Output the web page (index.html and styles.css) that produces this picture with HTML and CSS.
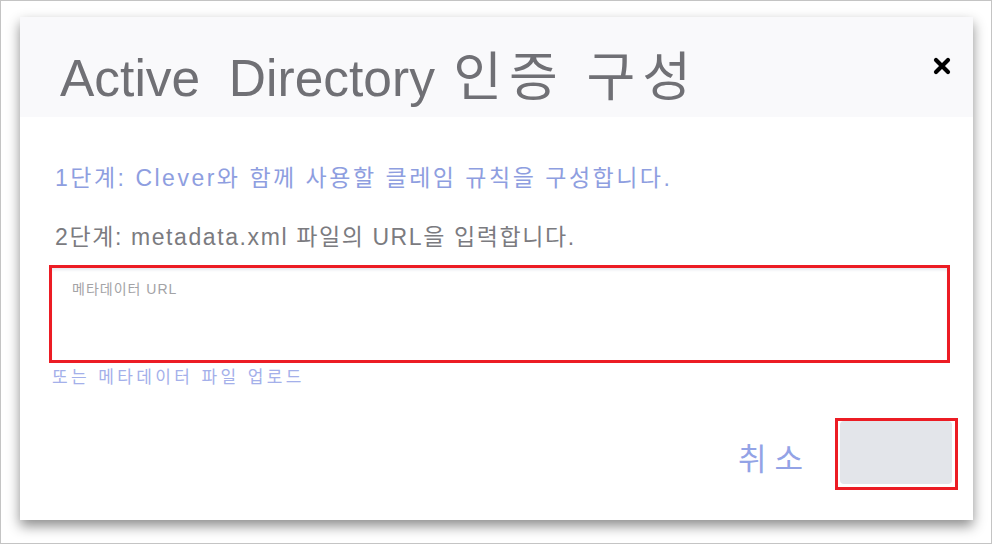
FILE: index.html
```html
<!DOCTYPE html>
<html lang="ko">
<head>
<meta charset="utf-8">
<title>Active Directory 인증 구성</title>
<link rel="stylesheet" href="styles.css">
</head>
<body>
<div class="frame">
  <div class="dialog">
    <div class="header">
      <h1 class="title">Active&nbsp; Directory <span class="title-ko">인증 구성</span></h1>
      <button class="close" aria-label="닫기">
        <svg width="18" height="18" viewBox="0 0 18 18"><path d="M3 3 L15 15 M15 3 L3 15" stroke="#000" stroke-width="4.2" stroke-linecap="round"/></svg>
      </button>
    </div>
    <div class="content">
      <p class="step step-one">1단계: Clever와 함께 사용할 클레임 규칙을 구성합니다.</p>
      <p class="step step-two">2단계: metadata.xml 파일의 URL을 입력합니다.</p>
      <div class="field">
        <div class="placeholder">메타데이터 URL</div>
      </div>
      <a class="upload">또는 메타데이터 파일 업로드</a>
      <div class="actions">
        <span class="cancel">취소</span>
        <div class="ok-wrap"><div class="ok"></div></div>
      </div>
    </div>
  </div>
</div>
</body>
</html>
```
FILE: styles.css
```css
* { box-sizing: border-box; }
html, body { margin: 0; padding: 0; background: #fff; }
body { font-family: "Liberation Sans", "Noto Sans CJK KR", sans-serif; }

.frame {
  width: 992px;
  height: 544px;
  border: 1px solid #c4c4c4;
  padding: 16px 18px 0 19px;
  background: #fff;
}

.dialog {
  width: 953px;
  height: 503px;
  background: #fff;
  box-shadow: 0 6px 12px rgba(0, 0, 0, 0.45);
  display: flex;
  flex-direction: column;
}

.header {
  height: 100px;
  background: #f9f9fb;
  display: flex;
  align-items: flex-start;
  justify-content: space-between;
  padding: 0 22px 0 40px;
}

.title {
  margin: 0;
  font-weight: normal;
  font-size: 51.5px;
  line-height: 1;
  color: #707075;
  padding-top: 34px;
  white-space: nowrap;
}
.title-ko {
  font-size: 53px;
  letter-spacing: 7px;
  margin-left: 4px;
}

.close {
  border: 0;
  background: transparent;
  padding: 0;
  width: 18px;
  height: 18px;
  margin-top: 40px;
  display: flex;
}

.content {
  flex: 1;
  display: flex;
  flex-direction: column;
  padding: 48px 23px 0 29px;
}

.step {
  margin: 0;
  font-size: 23px;
  line-height: 26px;
  padding-left: 6px;
  white-space: nowrap;
}
.step-one { color: #8e9ee0; letter-spacing: 2.5px; }
.step-two { color: #7b7b7f; margin-top: 33px; letter-spacing: 1.6px; }

.field {
  margin-top: 15px;
  height: 98px;
  border: 3px solid #ec1c24;
  box-shadow: inset 0 3px 3px -1px #e6e8ee;
  padding: 10px 0 0 20px;
}
.placeholder {
  font-size: 14px;
  letter-spacing: 1px;
  color: #a3a3a6;
}

.upload {
  margin-top: 4px;
  padding-left: 3px;
  font-size: 17px;
  line-height: 22px;
  letter-spacing: 3.4px;
  color: #a4b0ea;
  white-space: nowrap;
}

.actions {
  margin-top: 29px;
  margin-right: -8px;
  display: flex;
  align-items: center;
  justify-content: flex-end;
  gap: 24px;
}
.cancel {
  font-size: 31px;
  letter-spacing: 8px;
  color: #93a3e6;
  margin-top: 4px;
}
.ok-wrap {
  width: 123px;
  height: 72px;
  border: 3px solid #ec1c24;
  padding: 0 3px 3px 2px;
}
.ok {
  width: 100%;
  height: 100%;
  background: #e3e5ea;
  border-radius: 4px;
}
```
